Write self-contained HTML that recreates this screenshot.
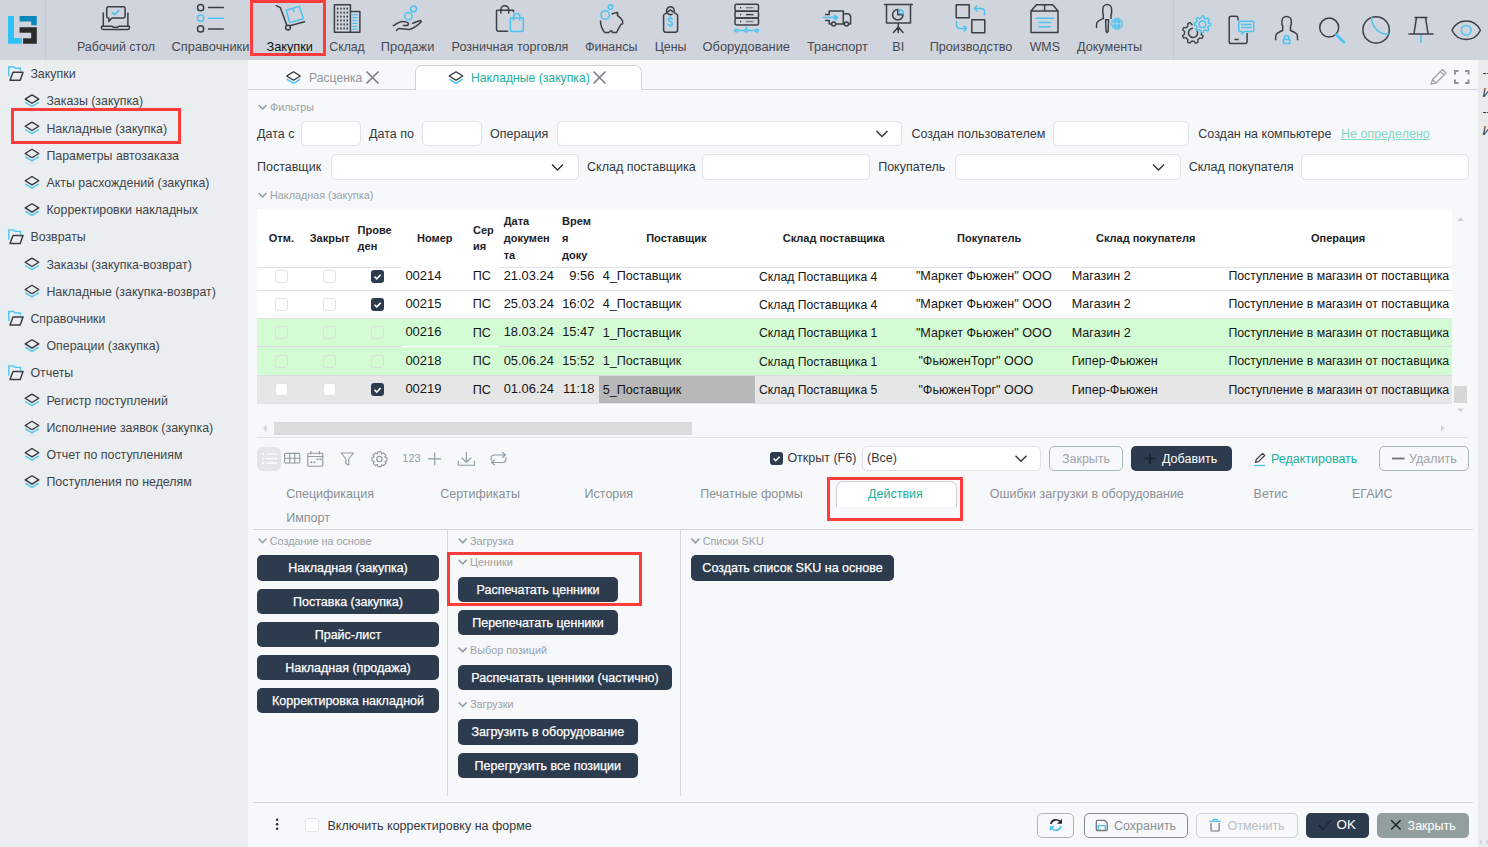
<!DOCTYPE html>
<html><head><meta charset="utf-8">
<style>
*{box-sizing:border-box;margin:0;padding:0}
html,body{width:1488px;height:847px;overflow:hidden;background:#f7f8fa;font-family:"Liberation Sans",sans-serif;color:#3c4046}
.a{position:absolute}
.t{position:absolute;white-space:nowrap;line-height:1}
svg{position:absolute;overflow:visible}
#top{position:absolute;left:0;top:0;width:1488px;height:60px;background:#d0d4dc}
.nl{position:absolute;top:40px;font-size:12.4px;color:#464a52;white-space:nowrap;line-height:14px}
#side{position:absolute;left:0;top:60px;width:248px;height:787px;background:#ebeef0}
.si{position:absolute;font-size:12.4px;color:#40444a;white-space:nowrap;line-height:14px}
.redbox{position:absolute;border:3px solid #ff3b3b}
.inp{position:absolute;background:#fff;border:1px solid #dfe2e6;border-radius:5px}
.lbl{position:absolute;font-size:12.5px;color:#34383e;white-space:nowrap;line-height:14px}
.gh{position:absolute;font-size:11px;color:#9ba1a7;white-space:nowrap;line-height:12px}
.th{position:absolute;font-size:11px;font-weight:bold;color:#1e2226;white-space:nowrap;line-height:15.5px}
.td{position:absolute;font-size:12.5px;color:#141414;white-space:nowrap;line-height:14px}
.cb{position:absolute;width:13px;height:13px;border:1px solid #e2e4e7;border-radius:3px;background:#fff}
.cbk{position:absolute;width:13px;height:13px;border-radius:3px;background:#2d3b4e}
.btn{position:absolute;background:#2d3b4e;border-radius:5px;color:#fff;font-size:12.5px;-webkit-text-stroke:0.25px #fff;text-align:center;line-height:25px;white-space:nowrap}
.dt{position:absolute;font-size:12.5px;color:#8a9096;white-space:nowrap;line-height:14px}
</style></head><body>
<div id="top">
<div class="a" style="left:45px;top:0;width:1px;height:60px;background:#c6cad2"></div>
<div class="a" style="left:1173px;top:0;width:1px;height:60px;background:#c6cad2"></div>
<svg width="1488" height="60" style="left:0;top:0">
<!-- logo -->
<path d="M8 16H14V38H21.7V43.8H8Z" fill="#2ec1f5"/>
<path d="M19.6 16H36.8V25.3H31.2V21.6H19.6Z" fill="#0a88bd"/>
<path d="M19.6 27.2H36.8V43.8H23.1V38.3H31.2V32.7H19.6Z" fill="#2b2b2b"/>
<g fill="none" stroke="#3b3f45" stroke-width="1.5" stroke-linecap="round" stroke-linejoin="round">
<!-- desktop -->
<path d="M103.3 13V26M127.9 13V26"/>
<path d="M101.5 26.2H112L113.5 27.3H117.5L119 26.2H129.4V28A1.6 1.6 0 0 1 127.8 29.5H103A1.6 1.6 0 0 1 101.5 28Z"/>
<path d="M108.3 6.8H123.5A1.6 1.6 0 0 1 125.1 8.4V16.3A1.6 1.6 0 0 1 123.5 17.9H112L108.8 21.4V17.9H108.3A1.6 1.6 0 0 1 106.7 16.3V8.4A1.6 1.6 0 0 1 108.3 6.8Z"/>
<!-- spravochniki -->
<circle cx="200.6" cy="7.7" r="3.1"/><circle cx="200.6" cy="28.9" r="3.1"/>
<path d="M208.5 7.4H223.3M208.5 28.9H223.3"/>
<!-- cart -->
<path d="M276.3 5.6L280.3 7.6L286.6 24.8M289.8 25.8L304.6 21.8"/>
<circle cx="288" cy="27.6" r="2.4"/>
<!-- sklad -->
<rect x="334.4" y="4.8" width="16" height="27.5"/>
<path d="M350.4 11.5H359.9V32.3H350.4"/>
<!-- prodazhi hand -->
<path d="M393.3 25.7C396 24 399.5 21.5 402.5 21.5C404.5 21.5 407 22 408.2 23C408.8 24 408.3 25.3 406.5 25.4H403.5M412.7 23.3L419.5 20.7C420.8 20.3 421.8 21.3 420.9 22.2C418 25 413 28.5 409.3 29.4C407 29.6 402 28.6 399.2 28.6C398 28.6 397.2 29.6 396.5 30.4"/>
<!-- retail dark bag -->
<path d="M513.5 11.8V10.2H497.3A.8 .8 0 0 0 496.5 11V29A2.3 2.3 0 0 0 498.8 31.3H507.5"/>
<path d="M500.9 13V9.6A3.9 3.9 0 0 1 508.7 9.6V13"/>
<!-- piggy -->
<path d="M612.2 14C613.5 13.2 615.5 12.3 617.3 12.4L617.8 13.3L617.4 15.3C619 16.5 620.8 18 621.8 19.6L622.6 20.8V23.8L620.8 24.5C619.5 27 618 29.3 616.6 32.5H612.4L612 30.9H610.2L609 32.4H604.6C602 29 600.5 24.5 600.5 21"/>
<!-- tag -->
<path d="M670.4 9.8L663.6 15V30A2.3 2.3 0 0 0 665.9 32.3H675.3A2.3 2.3 0 0 0 677.6 30V15Z"/>
<path d="M672.2 14.2A3.9 3.9 0 1 1 674.3 11.2"/>
<!-- server -->
<rect x="735" y="4.3" width="23.5" height="6.9" rx="1.4"/>
<rect x="735" y="11.2" width="23.5" height="6.9" rx="1.4"/>
<rect x="735" y="18.1" width="23.5" height="6.9" rx="1.4"/>
<!-- truck -->
<path d="M825.6 14.4H829.2V10.9H843.3V23.9H835.8M825.6 20.4H829.2V23.9H831.6M843.3 13.7H847.5A3.1 3.1 0 0 1 850.6 16.8V23.9H848.5M843.3 23.9H844.4"/>
<circle cx="833.7" cy="23.9" r="2"/><circle cx="846.5" cy="23.9" r="2"/>
<!-- BI -->
<path d="M884.5 4.6H912.3M886.5 4.6V23H910.5V4.6M898.3 23V32.5M898.3 27L893.5 32.5M898.3 27L903 32.5"/>
<path d="M897.8 9.5A5.2 5.2 0 1 0 903 14.7H897.8Z"/>
<!-- production -->
<rect x="956.2" y="4.7" width="13" height="13"/>
<rect x="971.8" y="19.7" width="13" height="13"/>
<!-- WMS -->
<path d="M1036.5 4.7H1052.7L1058 11V32.5H1031V11Z M1031 11H1058 M1044.6 4.7V11"/>
<!-- docs person -->
<path d="M1103.3 18.5V14.5L1102.8 13.5V9A4.4 4.4 0 0 1 1111.6 9V13.5L1111 14.5V18.5M1103.3 18.5C1101 19.5 1098 20.5 1097 22.5C1096.5 23.5 1096.5 26 1096.5 27.5M1105.6 19.8H1108.6L1108.1 31.5L1107.1 32.6L1106.1 31.5Z"/>
<!-- right gear dark -->
<path d="M1201.30 32.90 L1201.30 33.05 L1201.29 33.19 L1201.29 33.34 L1201.28 33.49 L1201.27 33.63 L1201.25 33.78 L1201.24 33.92 L1201.22 34.07 L1201.20 34.21 L1201.17 34.36 L1201.47 34.56 L1201.75 34.78 L1202.04 35.01 L1202.32 35.25 L1202.59 35.50 L1202.85 35.75 L1203.04 36.00 L1202.98 36.18 L1202.92 36.35 L1202.86 36.53 L1202.80 36.70 L1202.73 36.87 L1202.66 37.04 L1202.58 37.21 L1202.51 37.38 L1202.43 37.55 L1202.34 37.71 L1202.26 37.88 L1202.17 38.04 L1202.08 38.20 L1201.78 38.23 L1201.41 38.21 L1201.04 38.19 L1200.67 38.14 L1200.31 38.09 L1199.96 38.03 L1199.61 37.96 L1199.52 38.07 L1199.43 38.19 L1199.33 38.30 L1199.24 38.41 L1199.14 38.52 L1199.04 38.63 L1198.94 38.74 L1198.84 38.84 L1198.74 38.94 L1198.63 39.04 L1198.52 39.14 L1198.41 39.24 L1198.30 39.33 L1198.19 39.43 L1198.07 39.52 L1197.96 39.61 L1197.84 39.70 L1197.72 39.78 L1197.78 40.13 L1197.83 40.49 L1197.87 40.85 L1197.90 41.22 L1197.91 41.59 L1197.92 41.96 L1197.88 42.26 L1197.71 42.34 L1197.55 42.43 L1197.38 42.51 L1197.21 42.58 L1197.04 42.66 L1196.87 42.73 L1196.70 42.80 L1196.53 42.86 L1196.35 42.92 L1196.18 42.98 L1196.00 43.04 L1195.82 43.09 L1195.64 43.14 L1195.41 42.95 L1195.16 42.67 L1194.92 42.39 L1194.69 42.11 L1194.47 41.81 L1194.27 41.52 L1194.07 41.22 L1193.92 41.24 L1193.78 41.25 L1193.63 41.27 L1193.49 41.28 L1193.34 41.29 L1193.19 41.29 L1193.05 41.30 L1192.90 41.30 L1192.75 41.30 L1192.61 41.29 L1192.46 41.29 L1192.31 41.28 L1192.17 41.27 L1192.02 41.25 L1191.88 41.24 L1191.73 41.22 L1191.59 41.20 L1191.44 41.17 L1191.24 41.47 L1191.02 41.75 L1190.79 42.04 L1190.55 42.32 L1190.30 42.59 L1190.05 42.85 L1189.80 43.04 L1189.62 42.98 L1189.45 42.92 L1189.27 42.86 L1189.10 42.80 L1188.93 42.73 L1188.76 42.66 L1188.59 42.58 L1188.42 42.51 L1188.25 42.43 L1188.09 42.34 L1187.92 42.26 L1187.76 42.17 L1187.60 42.08 L1187.57 41.78 L1187.59 41.41 L1187.61 41.04 L1187.66 40.67 L1187.71 40.31 L1187.77 39.96 L1187.84 39.61 L1187.73 39.52 L1187.61 39.43 L1187.50 39.33 L1187.39 39.24 L1187.28 39.14 L1187.17 39.04 L1187.06 38.94 L1186.96 38.84 L1186.86 38.74 L1186.76 38.63 L1186.66 38.52 L1186.56 38.41 L1186.47 38.30 L1186.37 38.19 L1186.28 38.07 L1186.19 37.96 L1186.10 37.84 L1186.02 37.72 L1185.67 37.78 L1185.31 37.83 L1184.95 37.87 L1184.58 37.90 L1184.21 37.91 L1183.84 37.92 L1183.54 37.88 L1183.46 37.71 L1183.37 37.55 L1183.29 37.38 L1183.22 37.21 L1183.14 37.04 L1183.07 36.87 L1183.00 36.70 L1182.94 36.53 L1182.88 36.35 L1182.82 36.18 L1182.76 36.00 L1182.71 35.82 L1182.66 35.64 L1182.85 35.41 L1183.13 35.16 L1183.41 34.92 L1183.69 34.69 L1183.99 34.47 L1184.28 34.27 L1184.58 34.07 L1184.56 33.92 L1184.55 33.78 L1184.53 33.63 L1184.52 33.49 L1184.51 33.34 L1184.51 33.19 L1184.50 33.05 L1184.50 32.90 L1184.50 32.75 L1184.51 32.61 L1184.51 32.46 L1184.52 32.31 L1184.53 32.17 L1184.55 32.02 L1184.56 31.88 L1184.58 31.73 L1184.60 31.59 L1184.63 31.44 L1184.33 31.24 L1184.05 31.02 L1183.76 30.79 L1183.48 30.55 L1183.21 30.30 L1182.95 30.05 L1182.76 29.80 L1182.82 29.62 L1182.88 29.45 L1182.94 29.27 L1183.00 29.10 L1183.07 28.93 L1183.14 28.76 L1183.22 28.59 L1183.29 28.42 L1183.37 28.25 L1183.46 28.09 L1183.54 27.92 L1183.63 27.76 L1183.72 27.60 L1184.02 27.57 L1184.39 27.59 L1184.76 27.61 L1185.13 27.66 L1185.49 27.71 L1185.84 27.77 L1186.19 27.84 L1186.28 27.73 L1186.37 27.61 L1186.47 27.50 L1186.56 27.39 L1186.66 27.28 L1186.76 27.17 L1186.86 27.06 L1186.96 26.96 L1187.06 26.86 L1187.17 26.76 L1187.28 26.66 L1187.39 26.56 L1187.50 26.47 L1187.61 26.37 L1187.73 26.28 L1187.84 26.19 L1187.96 26.10 L1188.08 26.02 L1188.02 25.67 L1187.97 25.31 L1187.93 24.95 L1187.90 24.58 L1187.89 24.21 L1187.88 23.84 L1187.92 23.54 L1188.09 23.46 L1188.25 23.37 L1188.42 23.29 L1188.59 23.22 L1188.76 23.14 L1188.93 23.07 L1189.10 23.00 L1189.27 22.94 L1189.45 22.88 L1189.62 22.82 L1189.80 22.76 L1189.98 22.71 L1190.16 22.66 L1190.39 22.85 L1190.64 23.13 L1190.88 23.41 L1191.11 23.69 L1191.33 23.99 L1191.53 24.28 L1191.73 24.58 L1191.88 24.56 L1192.02 24.55" stroke-width="1.4"/>
<path d="M1197 30.5A4.6 4.6 0 1 1 1192.5 28.3" stroke-width="1.5"/>
<!-- phone -->
<path d="M1238 20V18A1.8 1.8 0 0 0 1236.2 16.2H1231A1.8 1.8 0 0 0 1229.2 18V41.8A1.8 1.8 0 0 0 1231 43.6H1245.3A1.8 1.8 0 0 0 1247.1 41.8V33.5M1235 39.5H1238"/>
<!-- person -->
<path d="M1282.7 30.5V25.8L1281.9 24.5V21.2A4.7 4.7 0 0 1 1291.3 21.2V24.5L1290.5 25.8V30.5C1293 31.5 1296 32.8 1297 34.5C1297.5 35.5 1297.6 37.5 1297.6 39.7M1282.7 30.5C1280.2 31.5 1277.2 32.8 1276.2 34.5C1275.7 35.5 1275.6 37.5 1275.6 39.7"/>
<!-- search -->
<circle cx="1329.2" cy="27.6" r="9.5"/>
<!-- moon circle -->
<circle cx="1376.1" cy="29.9" r="13.2"/>
<!-- pin -->
<path d="M1415 17.4H1427M1416.5 17.4L1414 33.5M1425.5 17.4L1428 33.5M1409 34H1433"/>
<!-- eye -->
<path d="M1452 30.3C1455 24 1460 21 1466.2 21C1472.4 21 1477.4 24 1480.4 30.3C1477.4 36.6 1472.4 39.6 1466.2 39.6C1460 39.6 1455 36.6 1452 30.3Z"/>
</g>
<g fill="#3b3f45">
<rect x="336.9" y="7.4" width="1.5" height="2.3" rx=".6"/><rect x="340.2" y="7.4" width="1.5" height="2.3" rx=".6"/><rect x="343.4" y="7.4" width="1.5" height="2.3" rx=".6"/><rect x="346.5" y="7.4" width="1.5" height="2.3" rx=".6"/>
<rect x="336.9" y="11.4" width="1.5" height="2.3" rx=".6"/><rect x="340.2" y="11.4" width="1.5" height="2.3" rx=".6"/><rect x="343.4" y="11.4" width="1.5" height="2.3" rx=".6"/><rect x="346.5" y="11.4" width="1.5" height="2.3" rx=".6"/>
<rect x="336.9" y="15.4" width="1.5" height="2.3" rx=".6"/><rect x="340.2" y="15.4" width="1.5" height="2.3" rx=".6"/><rect x="343.4" y="15.4" width="1.5" height="2.3" rx=".6"/><rect x="346.5" y="15.4" width="1.5" height="2.3" rx=".6"/>
<rect x="336.9" y="19.3" width="1.5" height="2.3" rx=".6"/><rect x="340.2" y="19.3" width="1.5" height="2.3" rx=".6"/><rect x="343.4" y="19.3" width="1.5" height="2.3" rx=".6"/><rect x="346.5" y="19.3" width="1.5" height="2.3" rx=".6"/>
<rect x="336.9" y="23.2" width="1.5" height="2.3" rx=".6"/><rect x="340.2" y="23.2" width="1.5" height="2.3" rx=".6"/><rect x="343.4" y="23.2" width="1.5" height="2.3" rx=".6"/><rect x="346.5" y="23.2" width="1.5" height="2.3" rx=".6"/>
<rect x="336.9" y="27.2" width="1.5" height="2.3" rx=".6"/><rect x="340.2" y="27.2" width="1.5" height="2.3" rx=".6"/><rect x="343.4" y="27.2" width="1.5" height="2.3" rx=".6"/><rect x="346.5" y="27.2" width="1.5" height="2.3" rx=".6"/>
<rect x="740" y="7" width="1.2" height="1.4"/><rect x="746" y="7" width="7.5" height="1.4" fill="#7d8186"/>
<rect x="740" y="13.9" width="1.2" height="1.4"/><rect x="746" y="13.9" width="7.5" height="1.4"/>
<rect x="740" y="20.8" width="1.2" height="1.4"/><rect x="746" y="20.8" width="7.5" height="1.4" fill="#7d8186"/>
</g>
<g fill="none" stroke="#4cc3f1" stroke-width="1.5" stroke-linecap="round" stroke-linejoin="round">
<path d="M112.5 12.5L114.6 14.6L118.8 10.4"/>
<circle cx="200.6" cy="18.2" r="3.1"/><path d="M208.5 18.2H223.3"/>
<path d="M286.2 10.2L299.4 6.2L303.3 18.8L289.8 22.6Z M293 8.2L294 11.5"/>
<path d="M352.8 14.7H357.2M352.8 17.6H357.2M352.8 20.5H357.2M352.8 23.4H357.2M352.8 26.3H357.2M352.8 29.2H357.2" stroke-width="1.2"/>
<circle cx="408.4" cy="16.2" r="3.7"/><circle cx="413.5" cy="8.9" r="2.9"/>
<path d="M510.3 18H523.3V29.3A2.1 2.1 0 0 1 521.2 31.4H512.4A2.1 2.1 0 0 1 510.3 29.3Z M513.5 20.3V16.8A3.2 3.2 0 0 1 519.9 16.8V20.3"/>
<circle cx="605.2" cy="14.9" r="4.2"/><circle cx="610.5" cy="7.1" r="2.3"/>
<path d="M672.3 19.3C671.8 18.6 671 18.3 670.2 18.3C669 18.3 668.3 19 668.3 19.8C668.3 22 672.5 21 672.5 23.7C672.5 24.6 671.5 25.3 670.3 25.3C669.3 25.3 668.5 25 668 24.3M670.4 17V18.3M670.4 25.3V26.8"/>
<path d="M735.5 30.6H758M746.4 27V29.5"/>
<circle cx="736.2" cy="30.6" r="1.4" fill="#d0d4dc"/><circle cx="746.4" cy="30.6" r="1.4" fill="#d0d4dc"/><circle cx="757" cy="30.6" r="1.4" fill="#d0d4dc"/>
<path d="M823.3 17.5H835.5"/><path d="M835 15L838.2 17.5L835 20Z" fill="#4cc3f1" stroke-width="1"/>
<path d="M899.3 9.5A4.2 4.2 0 0 1 903.3 13.5H899.3Z"/>
<path d="M974.5 8.5H981C983 8.5 984.5 10 984.5 12V14.5M976.8 6L974.5 8.5L976.8 11"/>
<path d="M956.5 21.5V25C956.5 27 958 28.5 960 28.5H966.5M964.2 26L966.5 28.5L964.2 31"/>
<path d="M1036 18.2H1053.5M1038.8 22.5H1050.5M1038.8 26.8H1050.5"/>
<circle cx="1202.5" cy="24.3" r="3.3"/>
<path d="M1210.80 24.30 L1210.80 24.44 L1210.79 24.59 L1210.79 24.73 L1210.78 24.88 L1210.77 25.02 L1210.75 25.17 L1210.74 25.31 L1210.72 25.46 L1210.70 25.60 L1210.46 25.70 L1210.14 25.78 L1209.82 25.86 L1209.50 25.92 L1209.19 25.97 L1208.87 26.01 L1208.56 26.04 L1208.52 26.14 L1208.49 26.25 L1208.46 26.35 L1208.42 26.45 L1208.38 26.56 L1208.34 26.66 L1208.30 26.76 L1208.26 26.86 L1208.21 26.96 L1208.16 27.06 L1208.11 27.16 L1208.06 27.26 L1208.01 27.35 L1207.96 27.45 L1207.90 27.54 L1207.84 27.64 L1207.78 27.73 L1207.72 27.82 L1207.90 28.08 L1208.08 28.35 L1208.24 28.63 L1208.40 28.91 L1208.55 29.20 L1208.69 29.49 L1208.76 29.75 L1208.67 29.85 L1208.57 29.96 L1208.47 30.07 L1208.37 30.17 L1208.27 30.27 L1208.16 30.37 L1208.05 30.47 L1207.95 30.56 L1207.84 30.66 L1207.72 30.75 L1207.61 30.84 L1207.50 30.93 L1207.38 31.01 L1207.13 30.92 L1206.85 30.75 L1206.58 30.58 L1206.31 30.40 L1206.05 30.21 L1205.80 30.01 L1205.55 29.81 L1205.46 29.86 L1205.36 29.91 L1205.26 29.96 L1205.16 30.01 L1205.06 30.06 L1204.96 30.10 L1204.86 30.14 L1204.76 30.18 L1204.65 30.22 L1204.55 30.26 L1204.45 30.29 L1204.34 30.32 L1204.24 30.36 L1204.13 30.39 L1204.02 30.41 L1203.92 30.44 L1203.81 30.46 L1203.70 30.48 L1203.65 30.80 L1203.58 31.11 L1203.50 31.42 L1203.41 31.73 L1203.31 32.04 L1203.20 32.35 L1203.08 32.58 L1202.93 32.59 L1202.79 32.59 L1202.64 32.60 L1202.50 32.60 L1202.36 32.60 L1202.21 32.59 L1202.07 32.59 L1201.92 32.58 L1201.78 32.57 L1201.63 32.55 L1201.49 32.54 L1201.34 32.52 L1201.20 32.50 L1201.10 32.26 L1201.02 31.94 L1200.94 31.62 L1200.88 31.30 L1200.83 30.99 L1200.79 30.67 L1200.76 30.36 L1200.66 30.32 L1200.55 30.29 L1200.45 30.26 L1200.35 30.22 L1200.24 30.18 L1200.14 30.14 L1200.04 30.10 L1199.94 30.06 L1199.84 30.01 L1199.74 29.96 L1199.64 29.91 L1199.54 29.86 L1199.45 29.81 L1199.35 29.76 L1199.26 29.70 L1199.16 29.64 L1199.07 29.58 L1198.98 29.52 L1198.72 29.70 L1198.45 29.88 L1198.17 30.04 L1197.89 30.20 L1197.60 30.35 L1197.31 30.49 L1197.05 30.56 L1196.95 30.47 L1196.84 30.37 L1196.73 30.27 L1196.63 30.17 L1196.53 30.07 L1196.43 29.96 L1196.33 29.85 L1196.24 29.75 L1196.14 29.64 L1196.05 29.52 L1195.96 29.41 L1195.87 29.30 L1195.79 29.18 L1195.88 28.93 L1196.05 28.65 L1196.22 28.38 L1196.40 28.11 L1196.59 27.85 L1196.79 27.60 L1196.99 27.35 L1196.94 27.26 L1196.89 27.16 L1196.84 27.06 L1196.79 26.96 L1196.74 26.86 L1196.70 26.76 L1196.66 26.66 L1196.62 26.56 L1196.58 26.45 L1196.54 26.35 L1196.51 26.25 L1196.48 26.14 L1196.44 26.04 L1196.41 25.93 L1196.39 25.82 L1196.36 25.72 L1196.34 25.61 L1196.32 25.50 L1196.00 25.45 L1195.69 25.38 L1195.38 25.30 L1195.07 25.21 L1194.76 25.11 L1194.45 25.00 L1194.22 24.88 L1194.21 24.73 L1194.21 24.59 L1194.20 24.44 L1194.20 24.30 L1194.20 24.16 L1194.21 24.01 L1194.21 23.87 L1194.22 23.72 L1194.23 23.58 L1194.25 23.43 L1194.26 23.29 L1194.28 23.14 L1194.30 23.00 L1194.54 22.90 L1194.86 22.82 L1195.18 22.74 L1195.50 22.68 L1195.81 22.63 L1196.13 22.59 L1196.44 22.56 L1196.48 22.46 L1196.51 22.35 L1196.54 22.25 L1196.58 22.15 L1196.62 22.04 L1196.66 21.94 L1196.70 21.84 L1196.74 21.74 L1196.79 21.64 L1196.84 21.54 L1196.89 21.44 L1196.94 21.34 L1196.99 21.25 L1197.04 21.15 L1197.10 21.06 L1197.16 20.96 L1197.22 20.87 L1197.28 20.78 L1197.10 20.52 L1196.92 20.25 L1196.76 19.97 L1196.60 19.69 L1196.45 19.40 L1196.31 19.11 L1196.24 18.85 L1196.33 18.75 L1196.43 18.64 L1196.53 18.53 L1196.63 18.43 L1196.73 18.33 L1196.84 18.23 L1196.95 18.13 L1197.05 18.04 L1197.16 17.94 L1197.28 17.85 L1197.39 17.76 L1197.50 17.67 L1197.62 17.59 L1197.87 17.68 L1198.15 17.85 L1198.42 18.02 L1198.69 18.20 L1198.95 18.39 L1199.20 18.59 L1199.45 18.79 L1199.54 18.74 L1199.64 18.69 L1199.74 18.64 L1199.84 18.59 L1199.94 18.54 L1200.04 18.50 L1200.14 18.46 L1200.24 18.42 L1200.35 18.38 L1200.45 18.34 L1200.55 18.31 L1200.66 18.28 L1200.76 18.24 L1200.87 18.21 L1200.98 18.19 L1201.08 18.16 L1201.19 18.14 L1201.30 18.12 L1201.35 17.80 L1201.42 17.49 L1201.50 17.18 L1201.59 16.87 L1201.69 16.56 L1201.80 16.25 L1201.92 16.02 L1202.07 16.01 L1202.21 16.01 L1202.36 16.00 L1202.50 16.00 L1202.64 16.00 L1202.79 16.01 L1202.93 16.01 L1203.08 16.02 L1203.22 16.03 L1203.37 16.05 L1203.51 16.06 L1203.66 16.08 L1203.80 16.10 L1203.90 16.34 L1203.98 16.66 L1204.06 16.98 L1204.12 17.30 L1204.17 17.61 L1204.21 17.93 L1204.24 18.24 L1204.34 18.28 L1204.45 18.31 L1204.55 18.34 L1204.65 18.38 L1204.76 18.42 L1204.86 18.46 L1204.96 18.50 L1205.06 18.54 L1205.16 18.59 L1205.26 18.64 L1205.36 18.69 L1205.46 18.74 L1205.55 18.79 L1205.65 18.84 L1205.74 18.90 L1205.84 18.96 L1205.93 19.02 L1206.02 19.08 L1206.28 18.90 L1206.55 18.72 L1206.83 18.56 L1207.11 18.40 L1207.40 18.25 L1207.69 18.11 L1207.95 18.04 L1208.05 18.13 L1208.16 18.23 L1208.27 18.33 L1208.37 18.43 L1208.47 18.53 L1208.57 18.64 L1208.67 18.75 L1208.76 18.85 L1208.86 18.96 L1208.95 19.08 L1209.04 19.19 L1209.13 19.30 L1209.21 19.42 L1209.12 19.67 L1208.95 19.95 L1208.78 20.22 L1208.60 20.49 L1208.41 20.75 L1208.21 21.00 L1208.01 21.25 L1208.06 21.34 L1208.11 21.44 L1208.16 21.54 L1208.21 21.64 L1208.26 21.74 L1208.30 21.84 L1208.34 21.94 L1208.38 22.04 L1208.42 22.15 L1208.46 22.25 L1208.49 22.35 L1208.52 22.46 L1208.56 22.56 L1208.59 22.67 L1208.61 22.78 L1208.64 22.88 L1208.66 22.99 L1208.68 23.10 L1209.00 23.15 L1209.31 23.22 L1209.62 23.30 L1209.93 23.39 L1210.24 23.49 L1210.55 23.60 L1210.78 23.72 L1210.79 23.87 L1210.79 24.01 L1210.80 24.16 L1210.80 24.30Z" stroke-width="1.4"/>
<path d="M1240 21.2H1252.5A1.2 1.2 0 0 1 1253.7 22.4V30.3A1.2 1.2 0 0 1 1252.5 31.5H1244.5L1241.8 34V31.5H1240A1.2 1.2 0 0 1 1238.8 30.3V22.4A1.2 1.2 0 0 1 1240 21.2Z M1241.5 24.5H1251M1241.5 27.5H1251"/>
<rect x="1283.3" y="39.6" width="6.6" height="4" rx=".5"/><path d="M1284.5 39.5V37.6A2.1 2.1 0 0 1 1288.7 37.6V39.5"/>
<path d="M1336.3 34.8L1344 42.3" stroke-width="2.6"/>
<path d="M1371.6 17.6A16.4 16.4 0 0 0 1388.4 34.3"/>
<path d="M1421 35.5V42.5"/>
<circle cx="1466.2" cy="30.3" r="4.9"/>
</g>
<g fill="#4cc3f1"><circle cx="1117" cy="23.8" r="6"/></g>
<g fill="none" stroke="#d0d4dc" stroke-width=".8"><path d="M1117 18.3V29.3M1111.5 23.8H1122.5M1114.2 19.3C1112.5 22 1112.5 25.6 1114.2 28.3M1119.8 19.3C1121.5 22 1121.5 25.6 1119.8 28.3"/></g>
</svg>
<div class="nl" style="left:16px;width:200px;text-align:center;font-size:12.45px">Рабочий стол</div>
<div class="nl" style="left:110.5px;width:200px;text-align:center;font-size:12.85px">Справочники</div>
<div class="nl" style="left:189.7px;width:200px;text-align:center;color:#111;font-size:12.75px">Закупки</div>
<div class="nl" style="left:247px;width:200px;text-align:center;font-size:12.2px">Склад</div>
<div class="nl" style="left:307.6px;width:200px;text-align:center;font-size:12.8px">Продажи</div>
<div class="nl" style="left:410px;width:200px;text-align:center;font-size:12.6px">Розничная торговля</div>
<div class="nl" style="left:511.2px;width:200px;text-align:center;font-size:12.5px">Финансы</div>
<div class="nl" style="left:570.6px;width:200px;text-align:center;font-size:12.4px">Цены</div>
<div class="nl" style="left:646.3px;width:200px;text-align:center;font-size:12.85px">Оборудование</div>
<div class="nl" style="left:737.4px;width:200px;text-align:center;font-size:12.7px">Транспорт</div>
<div class="nl" style="left:798.3px;width:200px;text-align:center;font-size:12.6px">BI</div>
<div class="nl" style="left:871px;width:200px;text-align:center;font-size:12.7px">Производство</div>
<div class="nl" style="left:944.8px;width:200px;text-align:center;font-size:12.4px">WMS</div>
<div class="nl" style="left:1009.5px;width:200px;text-align:center;font-size:12.6px">Документы</div>
<div class="redbox" style="left:250px;top:-0.5px;width:76px;height:56.2px"></div>
</div>

<div id="side">
<svg width="248" height="787" style="left:0;top:0">
<path d="M8.8 16.2V6.7H13.5L15 8.2H20.5V10.7" fill="none" stroke="#4cc3f1" stroke-width="1.4" stroke-linejoin="round"/>
<path d="M13 12.3H23L20.2 20.2H10Z" fill="none" stroke="#3b3f45" stroke-width="1.5" stroke-linejoin="round"/>
<path d="M25.2 39.1L32 34.9L38.8 39.1L32 43.3Z" fill="none" stroke="#2e3238" stroke-width="1.3" stroke-linejoin="round"/>
<path d="M25.2 42.3L32 46.5L38.8 42.3" fill="none" stroke="#4cc3f1" stroke-width="1.4" stroke-linejoin="round"/>
<path d="M25.2 66.3L32 62.1L38.8 66.3L32 70.5Z" fill="none" stroke="#2e3238" stroke-width="1.3" stroke-linejoin="round"/>
<path d="M25.2 69.5L32 73.7L38.8 69.5" fill="none" stroke="#4cc3f1" stroke-width="1.4" stroke-linejoin="round"/>
<path d="M25.2 93.5L32 89.3L38.8 93.5L32 97.7Z" fill="none" stroke="#2e3238" stroke-width="1.3" stroke-linejoin="round"/>
<path d="M25.2 96.7L32 100.9L38.8 96.7" fill="none" stroke="#4cc3f1" stroke-width="1.4" stroke-linejoin="round"/>
<path d="M25.2 120.7L32 116.5L38.8 120.7L32 124.9Z" fill="none" stroke="#2e3238" stroke-width="1.3" stroke-linejoin="round"/>
<path d="M25.2 123.9L32 128.1L38.8 123.9" fill="none" stroke="#4cc3f1" stroke-width="1.4" stroke-linejoin="round"/>
<path d="M25.2 147.9L32 143.7L38.8 147.9L32 152.1Z" fill="none" stroke="#2e3238" stroke-width="1.3" stroke-linejoin="round"/>
<path d="M25.2 151.1L32 155.3L38.8 151.1" fill="none" stroke="#4cc3f1" stroke-width="1.4" stroke-linejoin="round"/>
<path d="M8.8 179.4V169.9H13.5L15 171.4H20.5V173.9" fill="none" stroke="#4cc3f1" stroke-width="1.4" stroke-linejoin="round"/>
<path d="M13 175.5H23L20.2 183.4H10Z" fill="none" stroke="#3b3f45" stroke-width="1.5" stroke-linejoin="round"/>
<path d="M25.2 202.3L32 198.1L38.8 202.3L32 206.5Z" fill="none" stroke="#2e3238" stroke-width="1.3" stroke-linejoin="round"/>
<path d="M25.2 205.5L32 209.7L38.8 205.5" fill="none" stroke="#4cc3f1" stroke-width="1.4" stroke-linejoin="round"/>
<path d="M25.2 229.5L32 225.3L38.8 229.5L32 233.7Z" fill="none" stroke="#2e3238" stroke-width="1.3" stroke-linejoin="round"/>
<path d="M25.2 232.7L32 236.9L38.8 232.7" fill="none" stroke="#4cc3f1" stroke-width="1.4" stroke-linejoin="round"/>
<path d="M8.8 261.0V251.5H13.5L15 253.0H20.5V255.5" fill="none" stroke="#4cc3f1" stroke-width="1.4" stroke-linejoin="round"/>
<path d="M13 257.1H23L20.2 265.0H10Z" fill="none" stroke="#3b3f45" stroke-width="1.5" stroke-linejoin="round"/>
<path d="M25.2 283.9L32 279.7L38.8 283.9L32 288.1Z" fill="none" stroke="#2e3238" stroke-width="1.3" stroke-linejoin="round"/>
<path d="M25.2 287.1L32 291.3L38.8 287.1" fill="none" stroke="#4cc3f1" stroke-width="1.4" stroke-linejoin="round"/>
<path d="M8.8 315.4V305.9H13.5L15 307.4H20.5V309.9" fill="none" stroke="#4cc3f1" stroke-width="1.4" stroke-linejoin="round"/>
<path d="M13 311.5H23L20.2 319.4H10Z" fill="none" stroke="#3b3f45" stroke-width="1.5" stroke-linejoin="round"/>
<path d="M25.2 338.3L32 334.1L38.8 338.3L32 342.5Z" fill="none" stroke="#2e3238" stroke-width="1.3" stroke-linejoin="round"/>
<path d="M25.2 341.5L32 345.7L38.8 341.5" fill="none" stroke="#4cc3f1" stroke-width="1.4" stroke-linejoin="round"/>
<path d="M25.2 365.5L32 361.3L38.8 365.5L32 369.7Z" fill="none" stroke="#2e3238" stroke-width="1.3" stroke-linejoin="round"/>
<path d="M25.2 368.7L32 372.9L38.8 368.7" fill="none" stroke="#4cc3f1" stroke-width="1.4" stroke-linejoin="round"/>
<path d="M25.2 392.7L32 388.5L38.8 392.7L32 396.9Z" fill="none" stroke="#2e3238" stroke-width="1.3" stroke-linejoin="round"/>
<path d="M25.2 395.9L32 400.1L38.8 395.9" fill="none" stroke="#4cc3f1" stroke-width="1.4" stroke-linejoin="round"/>
<path d="M25.2 419.9L32 415.7L38.8 419.9L32 424.1Z" fill="none" stroke="#2e3238" stroke-width="1.3" stroke-linejoin="round"/>
<path d="M25.2 423.1L32 427.3L38.8 423.1" fill="none" stroke="#4cc3f1" stroke-width="1.4" stroke-linejoin="round"/>
</svg>
<div class="si" style="left:30.4px;top:7.2px">Закупки</div>
<div class="si" style="left:46.4px;top:34.4px">Заказы (закупка)</div>
<div class="si" style="left:46.4px;top:61.6px">Накладные (закупка)</div>
<div class="si" style="left:46.4px;top:88.8px">Параметры автозаказа</div>
<div class="si" style="left:46.4px;top:116.0px">Акты расхождений (закупка)</div>
<div class="si" style="left:46.4px;top:143.2px">Корректировки накладных</div>
<div class="si" style="left:30.4px;top:170.4px">Возвраты</div>
<div class="si" style="left:46.4px;top:197.6px">Заказы (закупка-возврат)</div>
<div class="si" style="left:46.4px;top:224.8px">Накладные (закупка-возврат)</div>
<div class="si" style="left:30.4px;top:252.0px">Справочники</div>
<div class="si" style="left:46.4px;top:279.2px">Операции (закупка)</div>
<div class="si" style="left:30.4px;top:306.4px">Отчеты</div>
<div class="si" style="left:46.4px;top:333.6px">Регистр поступлений</div>
<div class="si" style="left:46.4px;top:360.8px">Исполнение заявок (закупка)</div>
<div class="si" style="left:46.4px;top:388.0px">Отчет по поступлениям</div>
<div class="si" style="left:46.4px;top:415.2px">Поступления по неделям</div>
<div class="redbox" style="left:11px;top:48px;width:170px;height:36px"></div>
</div>
<div class="a" style="left:248px;top:88.5px;width:1230px;height:1px;background:#cfd3d8"></div>
<div class="a" style="left:415px;top:65px;width:227px;height:25px;background:#fff;border:1px solid #cfd3d8;border-bottom:none;border-radius:7px 7px 0 0"></div>
<div class="t" style="left:309px;top:72px;font-size:12.2px;color:#8f959b">Расценка</div>
<div class="t" style="left:471px;top:72px;font-size:12.2px;color:#20b09c">Накладные (закупка)</div>
<div class="a" style="left:1478px;top:60px;width:10px;height:787px;background:#e9ebed"></div>
<div class="t" style="left:1482.5px;top:67.3px;font-size:12px;color:#333">--</div>
<div class="t" style="left:1482.5px;top:87px;font-size:12.5px;color:#333;font-style:italic">И</div>
<div class="t" style="left:1482.5px;top:105.5px;font-size:12px;color:#333">--</div>
<div class="t" style="left:1482.5px;top:125.2px;font-size:12.5px;color:#333;font-style:italic">И</div>
<div class="t" style="left:270px;top:101.7px;font-size:10.8px;color:#9aa2a8">Фильтры</div>
<div class="t" style="left:257px;top:128.3px;font-size:12.5px;color:#34383e">Дата с</div>
<div class="inp" style="left:301px;top:121px;width:60px;height:25px"></div>
<div class="t" style="left:369px;top:128.3px;font-size:12.5px;color:#34383e">Дата по</div>
<div class="inp" style="left:422px;top:121px;width:60px;height:25px"></div>
<div class="t" style="left:490px;top:128.3px;font-size:12.5px;color:#34383e">Операция</div>
<div class="inp" style="left:557px;top:121px;width:345px;height:25px"></div>
<div class="t" style="left:911.4px;top:128.3px;font-size:12.5px;color:#34383e">Создан пользователем</div>
<div class="inp" style="left:1052.5px;top:121px;width:136.5px;height:25px"></div>
<div class="t" style="left:1198.3px;top:128.3px;font-size:12.5px;color:#34383e">Создан на компьютере</div>
<div class="t" style="left:1341px;top:128.3px;font-size:12.5px;color:#84d6c6;text-decoration:underline">Не определено</div>
<div class="t" style="left:257px;top:161.3px;font-size:12.5px;color:#34383e">Поставщик</div>
<div class="inp" style="left:331px;top:154px;width:248px;height:26px"></div>
<div class="t" style="left:587px;top:161.3px;font-size:12.5px;color:#34383e">Склад поставщика</div>
<div class="inp" style="left:702px;top:154px;width:168px;height:26px"></div>
<div class="t" style="left:878.2px;top:161.3px;font-size:12.5px;color:#34383e">Покупатель</div>
<div class="inp" style="left:954.5px;top:154px;width:226.5px;height:26px"></div>
<div class="t" style="left:1188.7px;top:161.3px;font-size:12.5px;color:#34383e">Склад покупателя</div>
<div class="inp" style="left:1301px;top:154px;width:168px;height:26px"></div>
<div class="t" style="left:270px;top:189.7px;font-size:10.8px;color:#9aa2a8">Накладная (закупка)</div>
<div class="a" style="left:257px;top:209px;width:1195px;height:195px;background:#fff"></div>
<div class="t" style="left:268.8px;top:233.0px;font-size:11px;font-weight:bold;color:#1e2226">Отм.</div>
<div class="t" style="left:309.7px;top:233.0px;font-size:11px;font-weight:bold;color:#1e2226">Закрыт</div>
<div class="t" style="left:357.6px;top:225.0px;font-size:11px;font-weight:bold;color:#1e2226">Прове</div>
<div class="t" style="left:357.6px;top:240.8px;font-size:11px;font-weight:bold;color:#1e2226">ден</div>
<div class="t" style="left:417px;top:233.0px;font-size:11px;font-weight:bold;color:#1e2226">Номер</div>
<div class="t" style="left:473px;top:225.0px;font-size:11px;font-weight:bold;color:#1e2226">Сер</div>
<div class="t" style="left:473px;top:240.8px;font-size:11px;font-weight:bold;color:#1e2226">ия</div>
<div class="t" style="left:503.7px;top:216.0px;font-size:11px;font-weight:bold;color:#1e2226">Дата</div>
<div class="t" style="left:503.7px;top:232.8px;font-size:11px;font-weight:bold;color:#1e2226">докумен</div>
<div class="t" style="left:503.7px;top:249.6px;font-size:11px;font-weight:bold;color:#1e2226">та</div>
<div class="t" style="left:562px;top:216.0px;font-size:11px;font-weight:bold;color:#1e2226">Врем</div>
<div class="t" style="left:562px;top:232.8px;font-size:11px;font-weight:bold;color:#1e2226">я</div>
<div class="t" style="left:562px;top:249.6px;font-size:11px;font-weight:bold;color:#1e2226">доку</div>
<div class="t" style="left:646.2px;top:233.0px;font-size:11px;font-weight:bold;color:#1e2226">Поставщик</div>
<div class="t" style="left:782.7px;top:233.0px;font-size:11px;font-weight:bold;color:#1e2226">Склад поставщика</div>
<div class="t" style="left:957px;top:233.0px;font-size:11px;font-weight:bold;color:#1e2226">Покупатель</div>
<div class="t" style="left:1096px;top:233.0px;font-size:11px;font-weight:bold;color:#1e2226">Склад покупателя</div>
<div class="t" style="left:1311px;top:233.0px;font-size:11px;font-weight:bold;color:#1e2226">Операция</div>
<div class="a" style="left:257px;top:267.5px;width:1195px;height:22.9px;background:#fff"></div>
<div class="cb" style="left:275.2px;top:270.1px;border-color:#e0e2e6;background:#fff"></div>
<div class="cb" style="left:323.1px;top:270.1px;border-color:#e0e2e6;background:#fff"></div>
<div class="cbk" style="left:371px;top:270.1px"></div>
<div class="t" style="left:405.4px;top:268.8px;font-size:13px;color:#141414">00214</div>
<div class="t" style="left:472.8px;top:270.3px;font-size:12.6px;color:#141414">ПС</div>
<div class="t" style="left:503.7px;top:269.7px;font-size:12.9px;color:#141414">21.03.24</div>
<div class="t" style="left:494.4px;width:100px;text-align:right;top:269.7px;font-size:12.9px;color:#141414">9:56</div>
<div class="t" style="left:602.8px;top:270.3px;font-size:12.6px;color:#141414">4_Поставщик</div>
<div class="t" style="left:759px;top:270.6px;font-size:12.2px;color:#141414">Склад Поставщика 4</div>
<div class="t" style="left:915.9px;top:270.3px;font-size:12.6px;color:#141414">"Маркет Фьюжен" ООО</div>
<div class="t" style="left:1071.7px;top:270.3px;font-size:12.6px;color:#141414">Магазин 2</div>
<div class="t" style="left:1228.4px;top:270.3px;font-size:12.6px;color:#141414"><span style="font-size:12.3px">Поступление в магазин от поставщика</span></div>
<div class="a" style="left:257px;top:290.4px;width:1195px;height:28.1px;background:#fff"></div>
<div class="cb" style="left:275.2px;top:298.2px;border-color:#e0e2e6;background:#fff"></div>
<div class="cb" style="left:323.1px;top:298.2px;border-color:#e0e2e6;background:#fff"></div>
<div class="cbk" style="left:371px;top:298.2px"></div>
<div class="t" style="left:405.4px;top:296.9px;font-size:13px;color:#141414">00215</div>
<div class="t" style="left:472.8px;top:298.4px;font-size:12.6px;color:#141414">ПС</div>
<div class="t" style="left:503.7px;top:297.8px;font-size:12.9px;color:#141414">25.03.24</div>
<div class="t" style="left:494.4px;width:100px;text-align:right;top:297.8px;font-size:12.9px;color:#141414">16:02</div>
<div class="t" style="left:602.8px;top:298.4px;font-size:12.6px;color:#141414">4_Поставщик</div>
<div class="t" style="left:759px;top:298.7px;font-size:12.2px;color:#141414">Склад Поставщика 4</div>
<div class="t" style="left:915.9px;top:298.4px;font-size:12.6px;color:#141414">"Маркет Фьюжен" ООО</div>
<div class="t" style="left:1071.7px;top:298.4px;font-size:12.6px;color:#141414">Магазин 2</div>
<div class="t" style="left:1228.4px;top:298.4px;font-size:12.6px;color:#141414"><span style="font-size:12.3px">Поступление в магазин от поставщика</span></div>
<div class="a" style="left:257px;top:318.5px;width:1195px;height:28.1px;background:#d4fcd4"></div>
<div class="cb" style="left:275.2px;top:326.3px;border-color:#dcdee2;background:#d4fcd4"></div>
<div class="cb" style="left:323.1px;top:326.3px;border-color:#dcdee2;background:#d4fcd4"></div>
<div class="cb" style="left:371px;top:326.3px;border-color:#dcdee2;background:#d4fcd4"></div>
<div class="t" style="left:405.4px;top:325.0px;font-size:13px;color:#141414">00216</div>
<div class="t" style="left:472.8px;top:326.5px;font-size:12.6px;color:#141414">ПС</div>
<div class="t" style="left:503.7px;top:325.9px;font-size:12.9px;color:#141414">18.03.24</div>
<div class="t" style="left:494.4px;width:100px;text-align:right;top:325.9px;font-size:12.9px;color:#141414">15:47</div>
<div class="t" style="left:602.8px;top:326.5px;font-size:12.6px;color:#141414">1_Поставщик</div>
<div class="t" style="left:759px;top:326.8px;font-size:12.2px;color:#141414">Склад Поставщика 1</div>
<div class="t" style="left:915.9px;top:326.5px;font-size:12.6px;color:#141414">"Маркет Фьюжен" ООО</div>
<div class="t" style="left:1071.7px;top:326.5px;font-size:12.6px;color:#141414">Магазин 2</div>
<div class="t" style="left:1228.4px;top:326.5px;font-size:12.6px;color:#141414"><span style="font-size:12.3px">Поступление в магазин от поставщика</span></div>
<div class="a" style="left:257px;top:346.6px;width:1195px;height:28.8px;background:#d4fcd4"></div>
<div class="cb" style="left:275.2px;top:355.1px;border-color:#dcdee2;background:#d4fcd4"></div>
<div class="cb" style="left:323.1px;top:355.1px;border-color:#dcdee2;background:#d4fcd4"></div>
<div class="cb" style="left:371px;top:355.1px;border-color:#dcdee2;background:#d4fcd4"></div>
<div class="t" style="left:405.4px;top:353.8px;font-size:13px;color:#141414">00218</div>
<div class="t" style="left:472.8px;top:355.3px;font-size:12.6px;color:#141414">ПС</div>
<div class="t" style="left:503.7px;top:354.7px;font-size:12.9px;color:#141414">05.06.24</div>
<div class="t" style="left:494.4px;width:100px;text-align:right;top:354.7px;font-size:12.9px;color:#141414">15:52</div>
<div class="t" style="left:602.8px;top:355.3px;font-size:12.6px;color:#141414">1_Поставщик</div>
<div class="t" style="left:759px;top:355.6px;font-size:12.2px;color:#141414">Склад Поставщика 1</div>
<div class="t" style="left:918.4px;top:355.3px;font-size:12.6px;color:#141414">"ФьюженТорг" ООО</div>
<div class="t" style="left:1071.7px;top:355.3px;font-size:12.6px;color:#141414">Гипер-Фьюжен</div>
<div class="t" style="left:1228.4px;top:355.3px;font-size:12.6px;color:#141414"><span style="font-size:12.3px">Поступление в магазин от поставщика</span></div>
<div class="a" style="left:257px;top:375.4px;width:1195px;height:28.2px;background:#e6e6e6"></div>
<div class="a" style="left:599px;top:375.4px;width:156px;height:28.2px;background:#b8b8b8"></div>
<div class="cb" style="left:275.2px;top:383.3px;border-color:#e0e2e6;background:#fff"></div>
<div class="cb" style="left:323.1px;top:383.3px;border-color:#e0e2e6;background:#fff"></div>
<div class="cbk" style="left:371px;top:383.3px"></div>
<div class="t" style="left:405.4px;top:382.0px;font-size:13px;color:#141414">00219</div>
<div class="t" style="left:472.8px;top:383.5px;font-size:12.6px;color:#141414">ПС</div>
<div class="t" style="left:503.7px;top:382.9px;font-size:12.9px;color:#141414">01.06.24</div>
<div class="t" style="left:494.4px;width:100px;text-align:right;top:382.9px;font-size:12.9px;color:#141414">11:18</div>
<div class="t" style="left:602.8px;top:383.5px;font-size:12.6px;color:#141414">5_Поставщик</div>
<div class="t" style="left:759px;top:383.8px;font-size:12.2px;color:#141414">Склад Поставщика 5</div>
<div class="t" style="left:918.4px;top:383.5px;font-size:12.6px;color:#141414">"ФьюженТорг" ООО</div>
<div class="t" style="left:1071.7px;top:383.5px;font-size:12.6px;color:#141414">Гипер-Фьюжен</div>
<div class="t" style="left:1228.4px;top:383.5px;font-size:12.6px;color:#141414"><span style="font-size:12.3px">Поступление в магазин от поставщика</span></div>
<div class="a" style="left:257px;top:289.9px;width:1195px;height:1px;background:#dfe2e6"></div>
<div class="a" style="left:257px;top:318.0px;width:1195px;height:1px;background:#dfe2e6"></div>
<div class="a" style="left:257px;top:346.1px;width:1195px;height:1px;background:#d9dde0"></div>
<div class="a" style="left:257px;top:374.9px;width:1195px;height:1px;background:#d9dde0"></div>
<div class="a" style="left:257px;top:403.1px;width:1195px;height:1px;background:#dfe2e6"></div>
<div class="a" style="left:401px;top:346.1px;width:97.8px;height:1px;background:#ffffff"></div>
<div class="a" style="left:257px;top:267px;width:144px;height:1px;background:#dde1e6"></div>
<div class="a" style="left:498.8px;top:267px;width:953.2px;height:1px;background:#dde1e6"></div>
<div class="a" style="left:1454px;top:385.5px;width:13px;height:17px;background:#d6d6d6"></div>
<div class="a" style="left:274px;top:422px;width:418px;height:12.5px;background:#dcdcdc"></div>
<div class="a" style="left:257px;top:436.5px;width:1211px;height:1px;background:#dfe2e6"></div>
<svg width="1488" height="847" style="left:0;top:0">
<path d="M286.7 76L293.5 71.8L300.3 76L293.5 80.2Z" fill="none" stroke="#2e3238" stroke-width="1.3" stroke-linejoin="round"/>
<path d="M286.7 79.2L293.5 83.4L300.3 79.2" fill="none" stroke="#4cc3f1" stroke-width="1.4" stroke-linejoin="round"/>
<path d="M449.2 76L456.0 71.8L462.8 76L456.0 80.2Z" fill="none" stroke="#2e3238" stroke-width="1.3" stroke-linejoin="round"/>
<path d="M449.2 79.2L456.0 83.4L462.8 79.2" fill="none" stroke="#4cc3f1" stroke-width="1.4" stroke-linejoin="round"/>
<path d="M366.5 71.5L378.5 83.5M378.5 71.5L366.5 83.5M593.5 71.5L605.5 83.5M605.5 71.5L593.5 83.5" stroke="#7a7e83" stroke-width="1.6"/>
<path d="M1431 84.2L1432.5 79.5L1442.5 69.5L1446 73L1436 83Z M1432.5 79.5L1436 83 M1440.5 71.5L1444 75" fill="none" stroke="#98a0a6" stroke-width="1.2" stroke-linejoin="round"/>
<path d="M1455 74.5V71H1458.5M1465 71H1468.5V74.5M1468.5 79.5V83H1465M1458.5 83H1455V79.5" fill="none" stroke="#8a949a" stroke-width="2"/>
<path d="M258.5 105L262.5 109L266.5 105" fill="none" stroke="#98a3a9" stroke-width="1.7"/>
<path d="M876.5 131.0L882.0 136.5L887.5 131.0" fill="none" stroke="#33373c" stroke-width="1.5"/>
<path d="M552 164.5L557.5 170.0L563 164.5" fill="none" stroke="#33373c" stroke-width="1.5"/>
<path d="M1153 164.5L1158.5 170.0L1164 164.5" fill="none" stroke="#33373c" stroke-width="1.5"/>
<path d="M258.5 193L262.5 197L266.5 193" fill="none" stroke="#98a3a9" stroke-width="1.7"/>
<path d="M374.5 276.6L376.7 278.8L380.7 274.8" fill="none" stroke="#fff" stroke-width="1.6"/>
<path d="M374.5 304.7L376.7 306.9L380.7 302.9" fill="none" stroke="#fff" stroke-width="1.6"/>
<path d="M374.5 389.8L376.7 392.0L380.7 388.0" fill="none" stroke="#fff" stroke-width="1.6"/>
<path d="M1457 221L1460.5 217.5L1464 221Z M1457 408.5L1460.5 412L1464 408.5Z M263 428.3L266.5 424.8V431.8Z M1441 424.8L1444.5 428.3L1441 431.8Z" fill="#cfd2d5"/>
</svg>
<div class="a" style="left:257px;top:447px;width:24px;height:23.5px;background:#e3e5e8;border-radius:6px"></div>
<div class="t" style="left:402.3px;top:453px;font-size:11px;color:#8f9ca3">123</div>
<div class="cbk" style="left:770px;top:452px"></div>
<div class="t" style="left:787.4px;top:452px;font-size:12.5px;color:#34383e">Открыт (F6)</div>
<div class="inp" style="left:861.5px;top:446px;width:179px;height:24.5px"></div>
<div class="t" style="left:867px;top:452px;font-size:12.5px;color:#34383e">(Все)</div>
<div class="a" style="left:1049.3px;top:446px;width:73.40000000000009px;height:25px;border:1px solid #a9b8b5;border-radius:5px"></div>
<div class="t" style="left:1049.3px;width:73.40000000000009px;text-align:center;top:453.0px;font-size:12.5px;color:#9ea4a9">Закрыть</div>
<div class="a" style="left:1131px;top:446px;width:101px;height:25px;background:#2d3b4e;border-radius:5px"></div>
<div class="t" style="left:1162px;top:453px;font-size:12.5px;color:#fff">Добавить</div>
<div class="t" style="left:1271px;top:453px;font-size:12.5px;color:#20b09c">Редактировать</div>
<div class="a" style="left:1378.7px;top:446px;width:90.29999999999995px;height:25px;border:1px solid #a9b8b5;border-radius:5px"></div>
<div class="t" style="left:1409px;top:453.0px;font-size:12.5px;color:#a0a5aa">Удалить</div>
<div class="t" style="left:286.2px;top:487.8px;font-size:12.5px;color:#8a9096">Спецификация</div>
<div class="t" style="left:440.2px;top:487.8px;font-size:12.5px;color:#8a9096">Сертификаты</div>
<div class="t" style="left:584.6px;top:487.8px;font-size:12.5px;color:#8a9096">История</div>
<div class="t" style="left:700.3px;top:487.8px;font-size:12.5px;color:#8a9096">Печатные формы</div>
<div class="a" style="left:835.5px;top:480.5px;width:121px;height:26px;background:#fff;border:1px solid #cfd3d8;border-bottom:none;border-radius:7px 7px 0 0"></div>
<div class="t" style="left:868px;top:487.8px;font-size:12.5px;color:#20b09c">Действия</div>
<div class="t" style="left:989.7px;top:487.8px;font-size:12.5px;color:#8a9096">Ошибки загрузки в оборудование</div>
<div class="t" style="left:1253.6px;top:487.8px;font-size:12.5px;color:#8a9096">Ветис</div>
<div class="t" style="left:1352px;top:487.8px;font-size:12.5px;color:#8a9096">ЕГАИС</div>
<div class="t" style="left:286.2px;top:512.0px;font-size:12.5px;color:#8a9096">Импорт</div>
<div class="redbox" style="left:827px;top:477px;width:136px;height:44px"></div>
<div class="a" style="left:253px;top:528.5px;width:1220px;height:1px;background:#d3d7dc"></div>
<div class="a" style="left:447px;top:529px;width:1px;height:267px;background:#d3d7dc"></div>
<div class="a" style="left:680px;top:529px;width:1px;height:267px;background:#d3d7dc"></div>
<div class="t" style="left:269.8px;top:535.5px;font-size:10.8px;color:#9aa2a8">Создание на основе</div>
<div class="btn" style="left:257px;top:555px;width:182px;height:25.799999999999955px;line-height:27.799999999999955px">Накладная (закупка)</div>
<div class="btn" style="left:257px;top:589.3px;width:182px;height:24.700000000000045px;line-height:26.700000000000045px">Поставка (закупка)</div>
<div class="btn" style="left:257px;top:622.4px;width:182px;height:24.200000000000045px;line-height:26.200000000000045px">Прайс-лист</div>
<div class="btn" style="left:257px;top:655.4px;width:182px;height:24.200000000000045px;line-height:26.200000000000045px">Накладная (продажа)</div>
<div class="btn" style="left:257px;top:688px;width:182px;height:24.799999999999955px;line-height:26.799999999999955px">Корректировка накладной</div>
<div class="t" style="left:470px;top:535.7px;font-size:10.8px;color:#9aa2a8">Загрузка</div>
<div class="t" style="left:470px;top:556.8px;font-size:10.8px;color:#9aa2a8">Ценники</div>
<div class="btn" style="left:458px;top:577.2px;width:160px;height:24.699999999999932px;line-height:26.699999999999932px">Распечатать ценники</div>
<div class="btn" style="left:458px;top:610.3px;width:160px;height:24.5px;line-height:26.5px">Перепечатать ценники</div>
<div class="t" style="left:470px;top:644.7px;font-size:10.8px;color:#9aa2a8">Выбор позиций</div>
<div class="btn" style="left:458px;top:665px;width:214px;height:25px;line-height:27px">Распечатать ценники (частично)</div>
<div class="t" style="left:470px;top:699.3px;font-size:10.8px;color:#9aa2a8">Загрузки</div>
<div class="btn" style="left:458px;top:719.2px;width:179.70000000000005px;height:25.399999999999977px;line-height:27.399999999999977px">Загрузить в оборудование</div>
<div class="btn" style="left:458px;top:753px;width:179.70000000000005px;height:24.799999999999955px;line-height:26.799999999999955px">Перегрузить все позиции</div>
<div class="redbox" style="left:447px;top:552px;width:195px;height:54px"></div>
<div class="t" style="left:702.7px;top:535.7px;font-size:10.8px;color:#9aa2a8">Списки SKU</div>
<div class="btn" style="left:691px;top:555px;width:203px;height:25.799999999999955px;line-height:27.799999999999955px">Создать список SKU на основе</div>
<div class="a" style="left:253px;top:802px;width:1220px;height:1px;background:#d3d7dc"></div>
<div class="cb" style="left:304.5px;top:818px;width:14px;height:14px;border-color:#dfe2e6"></div>
<div class="t" style="left:327.5px;top:820.3px;font-size:12.5px;color:#34383e">Включить корректировку на форме</div>
<div class="a" style="left:1037.3px;top:813.2px;width:37.100000000000136px;height:24.5px;border:1px solid #a9b8b5;border-radius:5px"></div>
<div class="a" style="left:1083.5px;top:813.2px;width:104.09999999999991px;height:24.5px;border:1px solid #7f8a94;border-radius:5px"></div>
<div class="t" style="left:1114px;top:820.0px;font-size:12.5px;color:#8a9096">Сохранить</div>
<div class="a" style="left:1196px;top:813.2px;width:101.70000000000005px;height:24.5px;border:1px solid #c9d3d1;border-radius:5px"></div>
<div class="t" style="left:1227.5px;top:820.0px;font-size:12.5px;color:#babfc4">Отменить</div>
<div class="a" style="left:1306px;top:813.2px;width:63px;height:24.8px;background:#2d3b4e;border-radius:5px"></div>
<div class="t" style="left:1336.5px;top:818.4px;font-size:13.4px;color:#fff">OK</div>
<div class="a" style="left:1377px;top:813.2px;width:92px;height:24.8px;background:#939f9e;border-radius:5px"></div>
<div class="t" style="left:1407.6px;top:819.8px;font-size:12.5px;color:#fff">Закрыть</div>
<svg width="1488" height="847" style="left:0;top:0">
<g fill="#fff"><circle cx="263.3" cy="454" r="1.1"/><circle cx="263.3" cy="458.6" r="1.1"/><circle cx="263.3" cy="463.2" r="1.1"/></g>
<path d="M266.5 454H277M266.5 458.6H277M266.5 463.2H277" stroke="#fff" stroke-width="1.2"/>
<g fill="none" stroke="#8f9ca3" stroke-width="1.15" stroke-linejoin="round" stroke-linecap="round"><rect x="284.6" y="453.4" width="15.2" height="9.6" rx="1"/><path d="M284.6 458.2H299.8M289.7 453.4V463M294.7 453.4V463"/><rect x="307.8" y="453.2" width="15" height="13" rx="1"/><path d="M307.8 456.5H322.8M311 451.5V454M319.5 451.5V454"/><path d="M341.2 453H353.4L348.8 459V465L345.8 463.5V459Z"/><circle cx="379.4" cy="459" r="2.6"/><path d="M377.8 451.8H381L381.6 454L383.5 452.9L385.8 455.2L384.7 457.1L387 457.7V460.9L384.9 461.5L386 463.4L383.7 465.7L381.8 464.6L381.2 466.6H378L377.4 464.5L375.5 465.6L373.2 463.3L374.3 461.4L372 460.8V457.6L374.1 457L373 455.1L375.3 452.8L377.2 453.9Z"/><path d="M434.7 452.7V465M428.5 458.8H440.9"/><path d="M466.4 452.3V462M462 458L466.4 462.3L470.8 458M458.3 461V465.2H474.5V461"/><path d="M491 460V458.5A3.5 3.5 0 0 1 494.5 455H505.5M502.5 452.5L505.5 455L502.5 457.5M506 457.5V459A3.5 3.5 0 0 1 502.5 462.5H491.5M494.5 465L491.5 462.5L494.5 460"/></g>
<g fill="#8f9ca3"><rect x="310.3" y="461.5" width="2" height="1.6"/><rect x="313.5" y="461.5" width="2" height="1.6"/><rect x="316.5" y="458.5" width="2" height="1.6"/><rect x="319.5" y="458.5" width="2" height="1.6"/></g>
<path d="M773.5 458.5L775.7 460.7L779.7 456.7" fill="none" stroke="#fff" stroke-width="1.6"/>
<path d="M1015.5 455.8L1021 461.3L1026.5 455.8" fill="none" stroke="#33373c" stroke-width="1.5"/>
<path d="M1150 453V464M1144.5 458.5H1155.5" stroke="#15202c" stroke-width="1.6"/>
<path d="M1255.5 462.5L1256.3 459.5L1262.5 453.3L1264.7 455.5L1258.5 461.7Z" fill="none" stroke="#3a3f45" stroke-width="1.2" stroke-linejoin="round"/><path d="M1253.8 465.5H1265" stroke="#4cc3f1" stroke-width="1.3"/>
<path d="M1392 458.5H1404.5" stroke="#6b7176" stroke-width="1.8"/>
<path d="M258.5 538.5L262.5 542.5L266.5 538.5" fill="none" stroke="#98a3a9" stroke-width="1.7"/>
<path d="M458.7 538.7L462.7 542.7L466.7 538.7" fill="none" stroke="#98a3a9" stroke-width="1.7"/>
<path d="M458.7 559.8000000000001L462.7 563.8000000000001L466.7 559.8000000000001" fill="none" stroke="#98a3a9" stroke-width="1.7"/>
<path d="M458.7 647.7L462.7 651.7L466.7 647.7" fill="none" stroke="#98a3a9" stroke-width="1.7"/>
<path d="M458.7 702.3000000000001L462.7 706.3000000000001L466.7 702.3000000000001" fill="none" stroke="#98a3a9" stroke-width="1.7"/>
<path d="M691.4000000000001 538.7L695.4000000000001 542.7L699.4000000000001 538.7" fill="none" stroke="#98a3a9" stroke-width="1.7"/>
<g fill="#1e2a3a"><circle cx="277.1" cy="819.8" r="1.2"/><circle cx="277.1" cy="824.3" r="1.2"/><circle cx="277.1" cy="828.8" r="1.2"/></g>
<path d="M1050.8 824A5.3 5.3 0 0 1 1060.5 822.3" fill="none" stroke="#23272c" stroke-width="1.6"/><path d="M1062 818.8V823.8H1057Z" fill="#23272c"/>
<path d="M1061 826A5.3 5.3 0 0 1 1051.3 827.7" fill="none" stroke="#4cc3f1" stroke-width="1.6"/><path d="M1049.8 831.2V826.2H1054.8Z" fill="#4cc3f1"/>
<path d="M1097.5 820.3H1104.5L1107.3 823.1V829.3A1.2 1.2 0 0 1 1106.1 830.5H1097.5A1.2 1.2 0 0 1 1096.3 829.3V821.5A1.2 1.2 0 0 1 1097.5 820.3Z" fill="none" stroke="#6f757b" stroke-width="1.3" stroke-linejoin="round"/><path d="M1098.3 830V825.7H1105.3V830" fill="none" stroke="#4cc3f1" stroke-width="1.3"/>
<path d="M1209.3 821.3H1220.8M1213.2 821V819.3H1216.9V821" fill="none" stroke="#4cc3f1" stroke-width="1.2"/><path d="M1211 823V830.2A.8 .8 0 0 0 1211.8 831H1218.3A.8 .8 0 0 0 1219.1 830.2V823" fill="none" stroke="#6f757b" stroke-width="1.2"/>
<path d="M1319 825.3L1323 829.6L1330.8 820.2" fill="none" stroke="#15202c" stroke-width="1.3"/>
<path d="M1391.2 820.2L1400.6 829.6M1400.6 820.2L1391.2 829.6" stroke="#15202c" stroke-width="1.4"/>
<path d="M1479 842L1481.5 839.5V844.5Z M1486.5 839.5L1489 842L1486.5 844.5Z" fill="#c9cdd1"/>
</svg>
</body></html>
